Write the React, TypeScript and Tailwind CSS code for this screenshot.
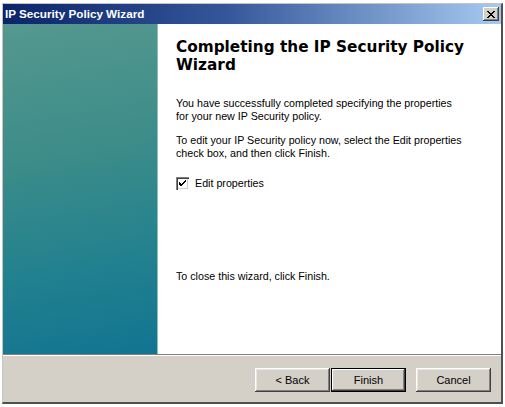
import React from 'react';

const sans = { fontFamily: '"Liberation Sans", Arial, sans-serif' };

const ClassicButton: React.FC<{ label: string; isDefault?: boolean }> = ({ label, isDefault }) => (
  <button
    className={`w-[75px] h-[24px] bg-[#d4d0c8] text-[11px] text-black ${
      isDefault
        ? 'border border-black shadow-[inset_-1px_-1px_0_#404040,inset_1px_1px_0_#ffffff,inset_-2px_-2px_0_#808080]'
        : 'shadow-[inset_-1px_-1px_0_#404040,inset_1px_1px_0_#ffffff,inset_-2px_-2px_0_#808080,inset_2px_2px_0_#e8e6e0]'
    }`}
    style={sans}
  >
    {label}
  </button>
);

const CheckIcon = () => (
  <svg width="9" height="9" viewBox="0 0 9 9" shapeRendering="crispEdges">
    <path d="M1 3h1v1h1v1h1V4h1V3h1V2h1V1h1v2h-1v1h-1v1h-1v1h-1v1h-1v1H3V7H2V6H1V5H1z" fill="#000" />
  </svg>
);

export default function App() {
  return (
    <div className="w-[505px] h-[407px] bg-white pl-[2px] pt-[3px]" style={sans}>
      {/* Window frame */}
      <div className="w-[501px] h-[401px] flex flex-col bg-[#d4d0c8] border-l border-t border-[#c8c4bc] border-r-2 border-b-2 border-r-[#505050] border-b-[#505050]">
        {/* Title bar */}
        <div className="h-[20px] flex items-center justify-between pl-[2px] pr-[2px] bg-[linear-gradient(to_right,#0a246a,#35579a_45%,#a6caf0)]">
          <span className="text-white font-bold text-[11.7px] leading-none">IP Security Policy Wizard</span>
          <div className="w-[16px] h-[14px] bg-[#d4d0c8] flex items-center justify-center shadow-[inset_-1px_-1px_0_#404040,inset_1px_1px_0_#ffffff,inset_-2px_-2px_0_#808080]">
            <svg width="8" height="7" viewBox="0 0 8 7" shapeRendering="crispEdges">
              <path d="M0 0h2v1h1v1h2V1h1V0h2v1H7v1H6v1H5v1h1v1h1v1h1v1H6V6H5V5H3v1H2v1H0V6h1V5h1V4h1V3H2V2H1V1H0z" fill="#000" />
            </svg>
          </div>
        </div>

        {/* Body */}
        <div className="h-[330px] flex">
          <div className="w-[155px] bg-[linear-gradient(170deg,#55988f_0%,#3c8c89_40%,#22818f_72%,#127491_100%)] border-r border-r-[#8fbcbc]" />
          <div className="w-[2px] bg-white" />
          <div className="flex-1 bg-white pl-[16px] pt-[14px]">
            <h1
              className="font-bold text-[15.3px] leading-[18px] text-black"
              style={{ fontFamily: '"DejaVu Sans", Verdana, sans-serif' }}
            >
              Completing the IP Security Policy
              <br />
              Wizard
            </h1>
            <p className="mt-[23px] text-[10.7px] leading-[13px] text-black">
              You have successfully completed specifying the properties
              <br />
              for your new IP Security policy.
            </p>
            <p className="mt-[11px] text-[10.7px] leading-[13px] text-black">
              To edit your IP Security policy now, select the Edit properties
              <br />
              check box, and then click Finish.
            </p>
            <label className="mt-[15px] flex items-center gap-[6px] text-[10.7px] text-black">
              <span className="w-[13px] h-[13px] bg-white flex items-center justify-center shadow-[inset_1px_1px_0_#808080,inset_2px_2px_0_#404040,inset_-1px_-1px_0_#ffffff,inset_-2px_-2px_0_#d4d0c8]">
                <CheckIcon />
              </span>
              Edit properties
            </label>
            <p className="mt-[79px] text-[10.7px] leading-[13px] text-black">To close this wizard, click Finish.</p>
          </div>
        </div>

        {/* Etched separator */}
        <div className="h-[1px] bg-[#808080]" />
        <div className="h-[1px] bg-white" />

        {/* Footer buttons */}
        <div className="flex-1 flex items-start justify-end pt-[12px] pr-[10px]">
          <ClassicButton label="< Back" />
          <div className="w-[1px]" />
          <ClassicButton label="Finish" isDefault />
          <div className="w-[10px]" />
          <ClassicButton label="Cancel" />
        </div>
      </div>
    </div>
  );
}
